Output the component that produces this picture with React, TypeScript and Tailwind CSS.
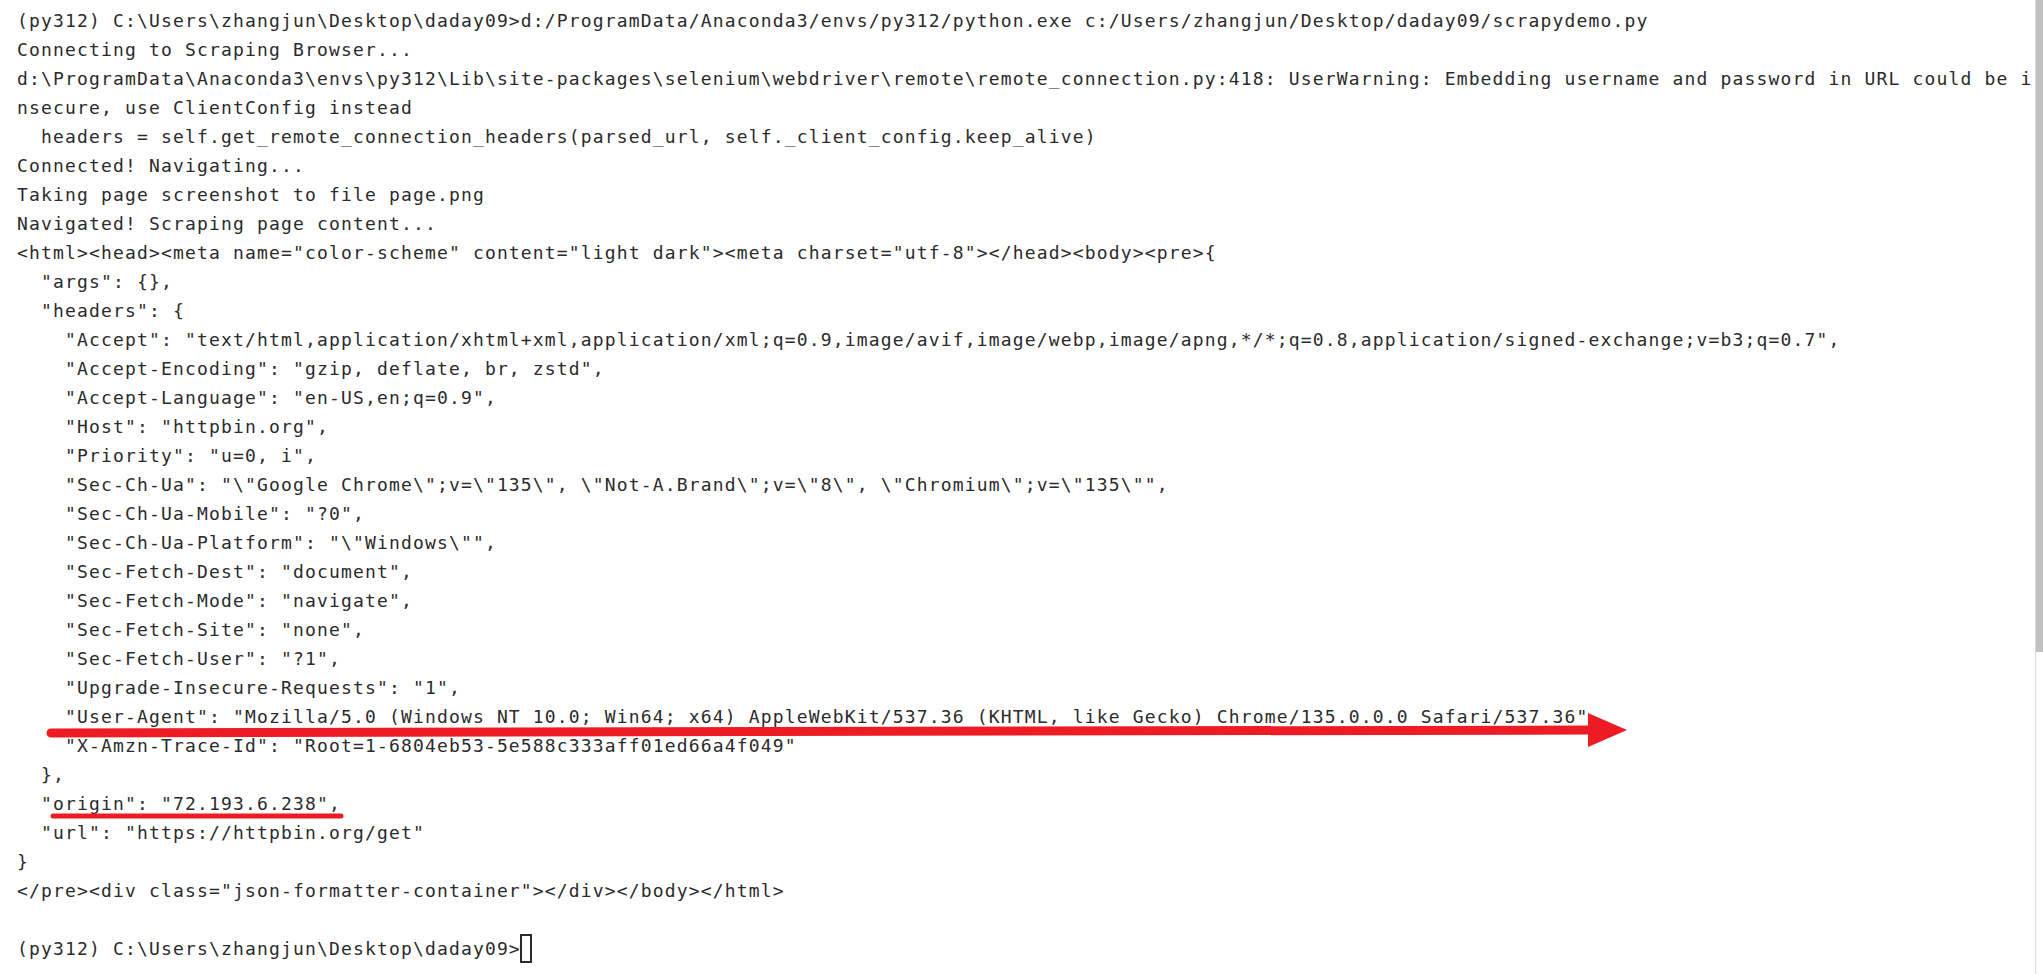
import React from 'react';

const lines: string[] = [
  '(py312) C:\\Users\\zhangjun\\Desktop\\daday09>d:/ProgramData/Anaconda3/envs/py312/python.exe c:/Users/zhangjun/Desktop/daday09/scrapydemo.py',
  'Connecting to Scraping Browser...',
  'd:\\ProgramData\\Anaconda3\\envs\\py312\\Lib\\site-packages\\selenium\\webdriver\\remote\\remote_connection.py:418: UserWarning: Embedding username and password in URL could be i',
  'nsecure, use ClientConfig instead',
  '  headers = self.get_remote_connection_headers(parsed_url, self._client_config.keep_alive)',
  'Connected! Navigating...',
  'Taking page screenshot to file page.png',
  'Navigated! Scraping page content...',
  '<html><head><meta name="color-scheme" content="light dark"><meta charset="utf-8"></head><body><pre>{',
  '  "args": {},',
  '  "headers": {',
  '    "Accept": "text/html,application/xhtml+xml,application/xml;q=0.9,image/avif,image/webp,image/apng,*/*;q=0.8,application/signed-exchange;v=b3;q=0.7",',
  '    "Accept-Encoding": "gzip, deflate, br, zstd",',
  '    "Accept-Language": "en-US,en;q=0.9",',
  '    "Host": "httpbin.org",',
  '    "Priority": "u=0, i",',
  '    "Sec-Ch-Ua": "\\"Google Chrome\\";v=\\"135\\", \\"Not-A.Brand\\";v=\\"8\\", \\"Chromium\\";v=\\"135\\"",',
  '    "Sec-Ch-Ua-Mobile": "?0",',
  '    "Sec-Ch-Ua-Platform": "\\"Windows\\"",',
  '    "Sec-Fetch-Dest": "document",',
  '    "Sec-Fetch-Mode": "navigate",',
  '    "Sec-Fetch-Site": "none",',
  '    "Sec-Fetch-User": "?1",',
  '    "Upgrade-Insecure-Requests": "1",',
  '    "User-Agent": "Mozilla/5.0 (Windows NT 10.0; Win64; x64) AppleWebKit/537.36 (KHTML, like Gecko) Chrome/135.0.0.0 Safari/537.36"',
  '    "X-Amzn-Trace-Id": "Root=1-6804eb53-5e588c333aff01ed66a4f049"',
  '  },',
  '  "origin": "72.193.6.238",',
  '  "url": "https://httpbin.org/get"',
  '}',
  '</pre><div class="json-formatter-container"></div></body></html>',
  '',
];

const prompt = '(py312) C:\\Users\\zhangjun\\Desktop\\daday09>';

// red marks drawn on top of the screenshot
const Annotations = () => (
  <svg className="pointer-events-none absolute left-0 top-0" width={2043} height={974}>
    <line x1={51} y1={733} x2={1592} y2={730} stroke="#ed1c24" strokeWidth={9} strokeLinecap="round" />
    <polygon points="1588,713 1627,730 1588,747" fill="#ed1c24" />
    <line x1={53} y1={816} x2={341} y2={816} stroke="#ed1c24" strokeWidth={5} strokeLinecap="round" />
  </svg>
);

export default function App() {
  return (
    <div className="relative flex h-[974px] w-[2043px] overflow-hidden bg-white">
      <div
        className="flex-1 pl-[17px] pt-[6px] text-[18px] leading-[29px] tracking-[1.16px] text-[#2b2b2b]"
        style={{ fontFamily: '"DejaVu Sans Mono", "Liberation Mono", monospace' }}
      >
        {lines.map((l, i) => (
          <div key={i} className="h-[29px] whitespace-pre">
            {l}
          </div>
        ))}
        <div className="flex h-[29px] items-start whitespace-pre">
          <span>{prompt}</span>
          <span className="ml-[-1px] inline-block h-[29px] w-[12px] border-2 border-[#2b2b2b]" />
        </div>
      </div>
      <div className="flex w-[8px] flex-col border-l border-[#dcdcdc]">
        <div className="h-[652px] bg-[#c1c1c1]" />
      </div>
      <Annotations />
    </div>
  );
}
